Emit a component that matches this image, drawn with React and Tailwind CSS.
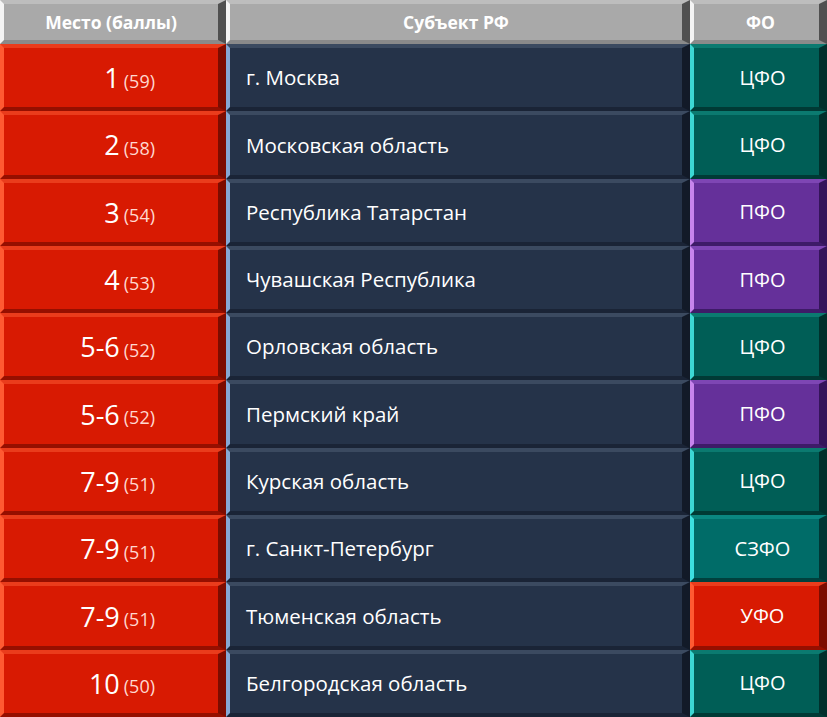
import React from 'react'

// Рейтинг субъектов РФ — таблица с "объёмными" ячейками
const rows = [
  { place: '1', score: 59, name: 'г. Москва', fo: 'ЦФО' },
  { place: '2', score: 58, name: 'Московская область', fo: 'ЦФО' },
  { place: '3', score: 54, name: 'Республика Татарстан', fo: 'ПФО' },
  { place: '4', score: 53, name: 'Чувашская Республика', fo: 'ПФО' },
  { place: '5-6', score: 52, name: 'Орловская область', fo: 'ЦФО' },
  { place: '5-6', score: 52, name: 'Пермский край', fo: 'ПФО' },
  { place: '7-9', score: 51, name: 'Курская область', fo: 'ЦФО' },
  { place: '7-9', score: 51, name: 'г. Санкт-Петербург', fo: 'СЗФО' },
  { place: '7-9', score: 51, name: 'Тюменская область', fo: 'УФО' },
  { place: '10', score: 50, name: 'Белгородская область', fo: 'ЦФО' },
]

const foStyles = {
  'ЦФО': 'bg-[#005e56] border-l-[#3cd8d4] border-t-[#0b7a70] border-r-[#00302c] border-b-[#003a35]',
  'СЗФО': 'bg-[#006c68] border-l-[#3ce0e0] border-t-[#0a8680] border-r-[#003634] border-b-[#00403d]',
  'ПФО': 'bg-[#65309a] border-l-[#c784ec] border-t-[#7e46b4] border-r-[#34145a] border-b-[#3e1b68]',
  'УФО': 'bg-[#d81a02] border-l-[#ff5a32] border-t-[#ea3c1c] border-r-[#7c0c00] border-b-[#960f00]',
}

const bevel = 'border-l-4 border-t-4 border-r-[8px] border-b-4'

function Header() {
  const cell = `${bevel} flex items-center justify-center bg-[#a9a9a9] border-l-[#f4f4f4] border-t-[#bdbdbd] border-r-[#505050] border-b-[#8a8a8a] text-white font-bold text-[17.5px]`
  return (
    <div className="grid grid-cols-[226px_464px_137px] h-[44px]">
      <div className={cell}>Место (баллы)</div>
      <div className={cell}>Субъект РФ</div>
      <div className={`${cell} pl-[8px]`}>ФО</div>
    </div>
  )
}

function Row({ r }) {
  return (
    <div className="grid grid-cols-[226px_464px_137px] h-[67.3px]">
      <div className={`${bevel} flex items-center justify-end pr-[63px] bg-[#d81a02] border-l-[#ff5a32] border-t-[#ea3c1c] border-r-[#7c0c00] border-b-[#960f00] text-white`}>
        <span className="text-[27px] leading-none">{r.place}</span>
        <span className="text-[18px] leading-none ml-1 mt-[6px] text-[#ffd8d0]">({r.score})</span>
      </div>
      <div className={`${bevel} flex items-center pl-[16px] bg-[#253349] border-l-[#86a8d4] border-t-[#3b4a60] border-r-[#121a28] border-b-[#1a2436] text-white text-[20.5px]`}>
        {r.name}
      </div>
      <div className={`${bevel} flex items-center justify-center pl-[12px] text-white text-[20px] ${foStyles[r.fo]}`}>
        {r.fo}
      </div>
    </div>
  )
}

export default function App() {
  return (
    <div className="w-[827px] h-[717px] overflow-hidden bg-[#1b2230] font-['Open_Sans',sans-serif]">
      <Header />
      {rows.map((r, i) => <Row key={i} r={r} />)}
    </div>
  )
}
